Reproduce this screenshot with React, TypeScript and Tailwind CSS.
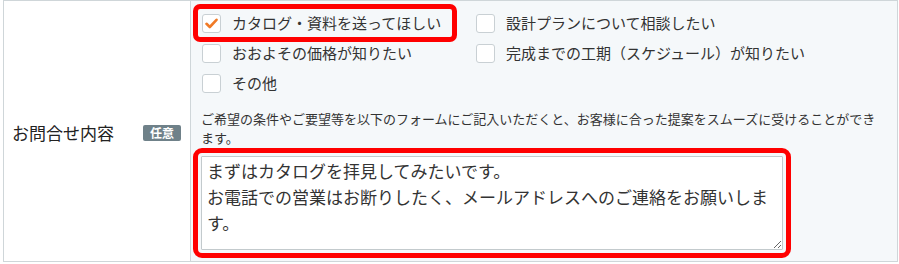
import React, { useState } from 'react'

// Checkbox option shape
interface InquiryOption {
    id: string;
    label: string;
    highlight?: boolean;
}

const options: InquiryOption[] = [
    { id: "catalog", label: "カタログ・資料を送ってほしい", highlight: true },
    { id: "plan", label: "設計プランについて相談したい" },
    { id: "price", label: "おおよその価格が知りたい" },
    { id: "schedule", label: "完成までの工期（スケジュール）が知りたい" },
    { id: "other", label: "その他" },
];

const CheckItem: React.FC<{ option: InquiryOption; checked: boolean; onToggle: () => void }> = ({ option, checked, onToggle }) => {
    return (
        <label
            className={`flex items-center h-[30px] pl-[5px] cursor-pointer ${
                option.highlight ? "w-[256px] rounded-[3px] outline-[5px] outline-offset-[-1px] outline-[#ff0000]" : ""
            }`}
        >
            <input type="checkbox" className="sr-only" checked={checked} onChange={onToggle} />
            <span className="flex items-center justify-center w-[19px] h-[19px] shrink-0 rounded-[3px] border border-[#c9d0d4] bg-white">
                {checked && (
                    <svg width="13" height="11" viewBox="0 0 13 11">
                        <path d="M1.5 5.8 L4.8 9 L11.5 1.8" fill="none" stroke="#f07a26" strokeWidth="2.6" strokeLinecap="round" strokeLinejoin="round" />
                    </svg>
                )}
            </span>
            <span className="ml-[11px] text-[15px] leading-[20px] text-[#333] whitespace-nowrap">{option.label}</span>
        </label>
    );
}

const App: React.FC = () => {
    const [checked, setChecked] = useState<Record<string, boolean>>({ catalog: true });
    const [message, setMessage] = useState<string>(
        "まずはカタログを拝見してみたいです。\nお電話での営業はお断りしたく、メールアドレスへのご連絡をお願いします。"
    );

    const toggle = (id: string) => setChecked((prev) => ({ ...prev, [id]: !prev[id] }));

  return (
    <div className="w-[899px] h-[264px] bg-white font-['Noto_Sans_CJK_JP','Noto_Sans',sans-serif]">
        <div className="ml-[3px] w-[895px] h-[262px] flex border border-[#cfd6d9]">
            {/* Label cell */}
            <div className="w-[187px] shrink-0 flex items-center justify-between pl-[8px] pr-[9px] pt-[3px] bg-white border-r border-[#cfd6d9]">
                <span className="text-[17px] leading-[24px] text-[#222]">お問合せ内容</span>
                <span className="w-[38px] h-[16px] flex items-center justify-center rounded-[2px] bg-[#6f8189] text-white text-[12px] leading-none font-bold">任意</span>
            </div>
            {/* Field cell */}
            <div className="flex-1 bg-[#f5f8fa] pt-[7px]">
                <div className="grid grid-cols-[274px_1fr] pl-[6px]">
                    {options.map((opt) => (
                        <CheckItem key={opt.id} option={opt} checked={!!checked[opt.id]} onToggle={() => toggle(opt.id)} />
                    ))}
                </div>
                <p className="mt-[11px] pl-[10px] pr-[10px] text-[13px] leading-[19px] text-[#333]">
                    ご希望の条件やご要望等を以下のフォームにご記入いただくと、お客様に合った提案をスムーズに受けることができます。
                </p>
                <div className="pl-[10px] mt-[9px]">
                    <textarea
                        className="block w-[582px] h-[94px] border border-[#c3cacd] bg-white px-[5px] py-[1px] text-[17px] leading-[26px] text-[#333] rounded-[1px] outline-[5px] outline-offset-[3px] outline-[#ff0000] outline-solid"
                        value={message}
                        onChange={(e) => setMessage(e.target.value)}
                    />
                </div>
            </div>
        </div>
    </div>
  );
}

export default App
